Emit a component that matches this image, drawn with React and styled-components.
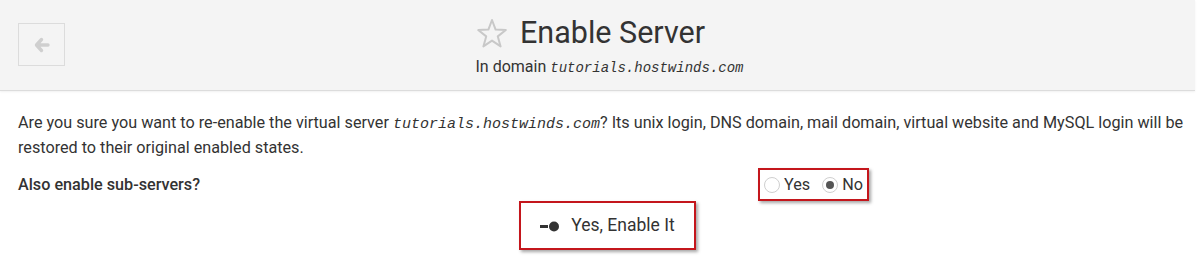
import React from "react";
import styled, { createGlobalStyle } from "styled-components";

const GlobalStyle = createGlobalStyle`
  body {
    margin: 0;
    background: #fff;
    font-family: Roboto, "Liberation Sans", sans-serif;
    color: #333;
  }
`;

const Page = styled.div`
  width: 1197px;
  height: 263px;
  overflow: hidden;
`;

const Header = styled.header`
  display: grid;
  grid-template-columns: 120px 1fr 120px;
  align-items: start;
  height: 90px;
  background: #f4f4f4;
  border-bottom: 1px solid #dcdcdc;
  box-shadow: 0 1px 2px rgba(0, 0, 0, 0.06);
  margin-right: 2px;
`;

const BackButton = styled.button`
  margin: 23px 0 0 18px;
  width: 47px;
  height: 43px;
  display: flex;
  align-items: center;
  justify-content: center;
  background: transparent;
  border: 1px solid #dcdcdc;
  padding: 0;
  cursor: pointer;
`;

const TitleBlock = styled.div`
  display: flex;
  flex-direction: column;
  align-items: center;
  padding-top: 14px;
`;

const Title = styled.h1`
  display: flex;
  align-items: center;
  gap: 12px;
  margin: 0 0 0 -14px;
  font-weight: 400;
  font-size: 30.5px;
  line-height: 38px;
  color: #333;
`;

const Subtitle = styled.div`
  margin: 5px 0 0 24px;
  font-size: 16px;
  line-height: 20px;
  color: #333;
`;

const Code = styled.code`
  font-family: "Liberation Mono", "DejaVu Sans Mono", monospace;
  font-style: italic;
  font-size: ${(p) => p.size || 14}px;
`;

const Body = styled.main`
  padding: 20px 0 0 18px;
  font-size: 16.2px;
  line-height: 23px;
`;

const Text = styled.p`
  margin: 0;
`;

const FormRow = styled.div`
  display: grid;
  grid-template-columns: 740px auto;
  align-items: center;
  margin-top: 9px;
`;

const Label = styled.div`
  font-weight: 500;
`;

const Highlight = styled.div`
  display: inline-flex;
  align-items: center;
  gap: ${(p) => p.gap || 0}px;
  border: 2px solid #c4161c;
  box-shadow: 2px 2px 3px rgba(0, 0, 0, 0.35);
  padding: ${(p) => p.pad};
`;

const RadioOption = styled.label`
  display: inline-flex;
  align-items: center;
  gap: 4px;
  margin-right: 12px;
  &:last-child {
    margin-right: 0;
  }
`;

const RadioCircle = styled.span`
  width: 14px;
  height: 14px;
  border-radius: 50%;
  border: 1px solid #cfcfcf;
  background: #fff;
  display: inline-flex;
  align-items: center;
  justify-content: center;
  &::after {
    content: "";
    width: 8px;
    height: 8px;
    border-radius: 50%;
    background: ${(p) => (p.checked ? "#555" : "transparent")};
  }
`;

const ButtonRow = styled.div`
  display: flex;
  justify-content: center;
  padding-left: 0;
  margin-top: 0;
`;

const ButtonText = styled.span`
  font-size: 17.5px;
  line-height: 21px;
  color: #333;
`;

function Radio({ label, checked }) {
  return (
    <RadioOption>
      <RadioCircle checked={checked} />
      {label}
    </RadioOption>
  );
}

function App() {
  return (
    <Page>
      <GlobalStyle />
      <Header>
        <BackButton aria-label="Back">
          <svg width="16" height="16" viewBox="0 0 16 16">
            <path
              d="M7.5 2.5 L2.5 8 L7.5 13.5 M3 8 H14"
              fill="none"
              stroke="#cfcfcf"
              strokeWidth="3.4"
              strokeLinecap="round"
              strokeLinejoin="round"
            />
          </svg>
        </BackButton>
        <TitleBlock>
          <Title>
            <svg width="32" height="31" viewBox="0 0 32 31">
              <path
                d="M16 2 L19.6 11.6 L29.8 12 L21.8 18.4 L24.6 28.4 L16 22.6 L7.4 28.4 L10.2 18.4 L2.2 12 L12.4 11.6 Z"
                fill="none"
                stroke="#c8c8c8"
                strokeWidth="2"
                strokeLinejoin="round"
              />
            </svg>
            Enable Server
          </Title>
          <Subtitle>
            In domain <Code>tutorials.hostwinds.com</Code>
          </Subtitle>
        </TitleBlock>
        <div />
      </Header>
      <Body>
        <Text>
          Are you sure you want to re-enable the virtual server{" "}
          <Code size={15}>tutorials.hostwinds.com</Code>? Its unix login, DNS
          domain, mail domain, virtual website and MySQL login will be restored
          to their original enabled states.
        </Text>
        <FormRow>
          <Label>Also enable sub-servers?</Label>
          <div>
            <Highlight pad="3px 4px 3px 4px">
              <Radio label="Yes" />
              <Radio label="No" checked />
            </Highlight>
          </div>
        </FormRow>
        <ButtonRow>
          <Highlight pad="12px 19px 12px 19px" gap={11}>
            <svg width="20" height="12" viewBox="0 0 20 12">
              <rect x="0" y="5" width="8" height="3" fill="#333" />
              <circle cx="14" cy="6.5" r="5" fill="#333" />
            </svg>
            <ButtonText>Yes, Enable It</ButtonText>
          </Highlight>
        </ButtonRow>
      </Body>
    </Page>
  );
}

export default App;
